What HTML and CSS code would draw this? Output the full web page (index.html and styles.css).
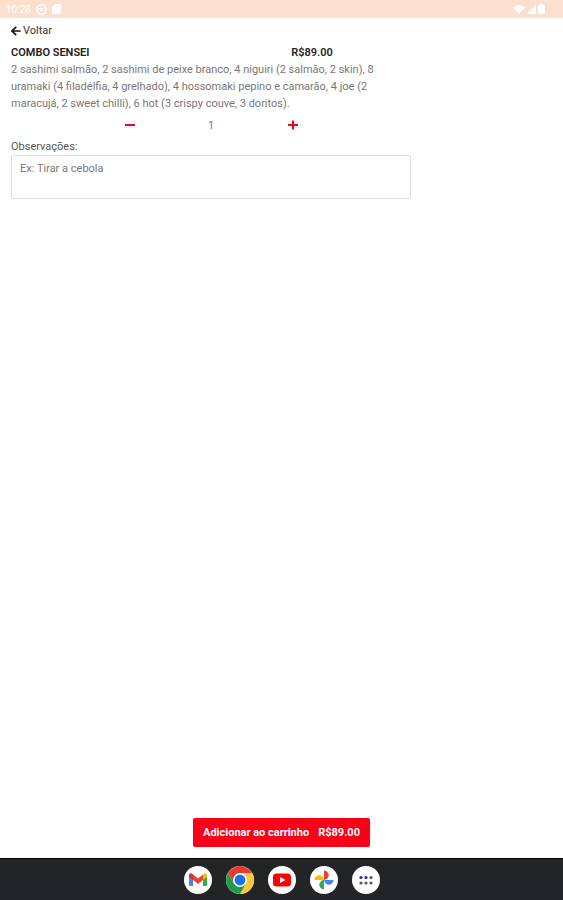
FILE: index.html
```html
<!DOCTYPE html>
<html lang="pt-BR">
<head>
    <meta charset="UTF-8">
    <meta name="viewport" content="width=device-width, initial-scale=1.0">
    <title>Combo Sensei</title>
    <link rel="stylesheet" href="styles.css">
</head>
<body>
    <header class="status-bar">
        <div class="status-left">
            <span>10:28</span>
            <svg width="11" height="11" viewBox="0 0 12 12">
                <circle cx="6" cy="6" r="5" fill="none" stroke="#fff" stroke-width="1.5"/>
                <path d="M3 5h6M4 7h4" stroke="#fff" stroke-width="1.5"/>
            </svg>
            <svg width="9" height="10" viewBox="0 0 9 10">
                <path d="M3 0h5a1 1 0 0 1 1 1v8a1 1 0 0 1-1 1H1a1 1 0 0 1-1-1V3z" fill="#fff"/>
                <path d="M3 2v1M5 2v1M7 2v1" stroke="#fce0cf"/>
            </svg>
        </div>
        <div class="status-right">
            <svg width="12" height="9" viewBox="0 0 12 9"><path d="M0 2.5Q6-2 12 2.5L6 9z" fill="#fff"/></svg>
            <svg width="9" height="9" viewBox="0 0 9 9"><path d="M9 0v9H0z" fill="#fff"/></svg>
            <svg width="7" height="10" viewBox="0 0 7 10"><path d="M2 0h3v1h1l1 1v7l-1 1H1L0 9V2l1-1h1z" fill="#fff"/></svg>
        </div>
    </header>

    <main class="page">
        <a href="#" class="back">
            <svg width="10" height="10" viewBox="0 0 10 10"><path d="M5.2.8L1 5l4.200 4.200M1 5h8.500" fill="none" stroke="#111" stroke-width="1.700"/></svg>
            Voltar
        </a>

        <section class="product">
            <div class="product-head">
                <h1>COMBO SENSEI</h1>
                <strong>R$89.00</strong>
            </div>
            <p class="description">2 sashimi salmão, 2 sashimi de peixe branco, 4 niguiri (2 salmão, 2 skin), 8 uramaki (4 filadélfia, 4 grelhado), 4 hossomaki pepino e camarão, 4 joe (2 maracujá, 2 sweet chilli), 6 hot (3 crispy couve, 3 doritos).</p>
            <div class="quantity">
                <button type="button" aria-label="Diminuir">
                    <svg width="10" height="10" viewBox="0 0 10 10"><path d="M0 5h10" stroke="#f5001d" stroke-width="2"/></svg>
                </button>
                <span>1</span>
                <button type="button" aria-label="Aumentar">
                    <svg width="10" height="10" viewBox="0 0 10 10"><path d="M0 5h10M5 .5v9" stroke="#f5001d" stroke-width="2"/></svg>
                </button>
            </div>
            <label for="notes">Observações:</label>
            <textarea id="notes" placeholder="Ex: Tirar a cebola"></textarea>
        </section>

        <button type="button" class="add-btn">
            <span>Adicionar ao carrinho</span>
            <span>R$89.00</span>
        </button>
    </main>

    <nav class="dock">
        <a href="#" class="app" aria-label="Gmail">
            <svg viewBox="0 0 28 28">
                <path d="M5 10v8.500Q5 20 6.500 20H9v-8z" fill="#4285f4"/>
                <path d="M23 10v8.500q0 1.500-1.500 1.500H19v-8z" fill="#34a853"/>
                <path d="M9 8.500l5 4 5-4V14l-5 4-5-4z" fill="#ea4335"/>
                <path d="M5 11V9.500C5 7 7.500 6.700 9 8.500V14z" fill="#d93025"/>
                <path d="M23 11V9.500C23 7 20.500 6.700 19 8.500V14z" fill="#fbbc04"/>
            </svg>
        </a>
        <a href="#" class="app" aria-label="Chrome">
            <svg viewBox="0 0 28 28">
                <path d="M14 14L1.880 7A14 14 0 0 1 26.120 7z" fill="#e33b2e"/>
                <path d="M14 7h12.120A14 14 0 0 1 14 28l6-10.500z" fill="#fcc934"/>
                <path d="M1.880 7A14 14 0 0 0 14 28l6-10.500-12 0z" fill="#1e9c4a"/>
                <path d="M1.880 7L8 17.500 14 14V7z" fill="#e33b2e"/>
                <circle cx="14" cy="14" r="7" fill="#fff"/>
                <circle cx="14" cy="14" r="5.400" fill="#1a73e8"/>
            </svg>
        </a>
        <a href="#" class="app" aria-label="YouTube">
            <svg viewBox="0 0 28 28">
                <rect x="5" y="7.500" width="18" height="13" rx="3.500" fill="#f00"/>
                <path d="M12 11l5.500 3-5.500 3z" fill="#fff"/>
            </svg>
        </a>
        <a href="#" class="app" aria-label="Fotos">
            <svg viewBox="0 0 28 28">
                <path d="M14 4.500a4.700 4.700 0 0 1 0 9.400z" fill="#ea4335"/>
                <path d="M23.500 14a4.700 4.700 0 0 1-9.400 0z" fill="#4285f4"/>
                <path d="M14 23.500a4.700 4.700 0 0 1 0-9.400z" fill="#34a853"/>
                <path d="M4.500 14a4.700 4.700 0 0 1 9.400 0z" fill="#fbbc04"/>
            </svg>
        </a>
        <a href="#" class="app" aria-label="Todos os apps">
            <svg viewBox="0 0 28 28" fill="#55566a">
                <circle cx="9" cy="11.500" r="1.600" fill="#27279a"/>
                <circle cx="14" cy="11.500" r="1.600" fill="#27279a"/>
                <circle cx="19" cy="11.500" r="1.600"/>
                <circle cx="9" cy="17" r="1.600"/>
                <circle cx="14" cy="17" r="1.600"/>
                <circle cx="19" cy="17" r="1.600"/>
            </svg>
        </a>
    </nav>
</body>
</html>
```

FILE: styles.css
```css
* {
    margin: 0;
    padding: 0;
    box-sizing: border-box;
}

body {
    display: flex;
    flex-direction: column;
    min-height: 100vh;
    background: #fff;
    color: #222;
    font-family: Roboto, sans-serif;
    font-size: 11px;
    line-height: 17px;
}

svg {
    display: block;
}

button {
    border: none;
    background: none;
    font: inherit;
    cursor: pointer;
}

.status-bar {
    display: flex;
    justify-content: space-between;
    height: 18px;
    padding: 0 18px 0 6px;
    background: #fce0cf;
    color: #fff;
    font-size: 10px;
}

.status-left,
.status-right {
    display: flex;
    align-items: center;
}

.status-left {
    gap: 5px;
}

.status-right {
    gap: 2px;
}

.page {
    flex: 1;
    display: flex;
    flex-direction: column;
    align-items: flex-start;
    padding: 4px 11px 11px;
}

.back {
    display: flex;
    align-items: center;
    gap: 2px;
    color: #333;
    text-decoration: none;
}

.product {
    width: 74%;
    padding-top: 5px;
}

.product-head {
    display: grid;
    grid-template-columns: 70% 30%;
}

.product-head h1,
.product-head strong {
    font-size: 11px;
    font-weight: 600;
}

.description {
    padding-right: 24px;
    color: #777;
}

.quantity {
    display: grid;
    grid-template-columns: repeat(3, 1fr);
    justify-items: center;
    align-items: center;
    width: 61%;
    height: 26px;
    margin: 0 auto;
    color: #777;
}

.quantity button {
    padding: 4px;
}

.product label {
    display: block;
    color: #555;
}

.product textarea {
    display: block;
    width: 100%;
    height: 44px;
    padding: 4px 8px;
    border: 1px solid #dcdfe0;
    border-radius: 2px;
    font: inherit;
    resize: none;
}

.product textarea::placeholder {
    color: #777;
}

.add-btn {
    display: flex;
    gap: 9px;
    align-self: center;
    margin-top: auto;
    padding: 6px 10px;
    border-radius: 2px;
    background: #fa0019;
    color: #fff;
    font-weight: 700;
}

.dock {
    display: flex;
    justify-content: center;
    align-items: center;
    gap: 14px;
    height: 42px;
    border-top: 1px solid #000;
    background: #232428;
}

.app {
    width: 28px;
    height: 28px;
    border-radius: 50%;
    background: #fff;
}
```
